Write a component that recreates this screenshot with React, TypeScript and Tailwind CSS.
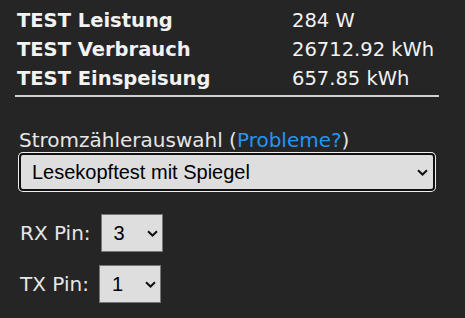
import React from "react";

const Chevron = ({ className = "" }: { className?: string }) => (
  <svg className={className} width="11" height="7" viewBox="0 0 11 7" fill="none">
    <path d="M1 1.2 L5.5 5.5 L10 1.2" stroke="#111" strokeWidth="2" />
  </svg>
);

const arial = { fontFamily: '"Liberation Sans", Arial, sans-serif' };

export default function App() {
  const rows = [
    ["TEST Leistung", "284 W"],
    ["TEST Verbrauch", "26712.92 kWh"],
    ["TEST Einspeisung", "657.85 kWh"],
  ];
  return (
    <div
      className="w-[465px] h-[318px] bg-[#252525] text-[#e6e6e6] overflow-hidden"
      style={{ fontFamily: '"DejaVu Sans", Verdana, sans-serif' }}
    >
      <div className="pl-[15px] pt-[6px]">
        <div className="w-[424px]">
          {rows.map(([k, v]) => (
            <div key={k} className="grid grid-cols-[275px_1fr] h-[29px] items-center pl-[2px]">
              <div className="font-bold text-[19.5px] text-[#f2f2f2]">{k}</div>
              <div className="text-[19.5px] text-[#f2f2f2]">{v}</div>
            </div>
          ))}
          <div className="mt-[2px] h-[2px] bg-[#d0d0d0]" />
        </div>
      </div>

      <div className="pl-[19px] mt-[32px]">
        <div className="text-[20px] leading-[23px] text-[#e6e6e6]">
          Stromzählerauswahl (<span className="text-[#2196f3]">Probleme?</span>)
        </div>
        <div className="mt-[1px] relative w-[416px] h-[38px] rounded-[4px] border-2 border-[#111] bg-[#dedede] shadow-[0_0_0_1px_#f0f0f0] flex items-center pl-[11px]">
          <span className="text-[20px] text-black" style={arial}>
            Lesekopftest mit Spiegel
          </span>
          <Chevron className="absolute right-[5px] top-[14px]" />
        </div>

        <div className="mt-[23px] flex items-center gap-[10px]">
          <span className="text-[20px] ml-[1px]">RX Pin:</span>
          <div className="relative w-[62px] h-[38px] border border-[#767676] bg-[#dedede] flex items-center pl-[12px]">
            <span className="text-[20px] text-black" style={arial}>3</span>
            <Chevron className="absolute right-[4px] top-[15px]" />
          </div>
        </div>
        <div className="mt-[13px] flex items-center gap-[10px]">
          <span className="text-[20px] ml-[1px]">TX Pin:</span>
          <div className="relative w-[62px] h-[38px] border border-[#767676] bg-[#dedede] flex items-center pl-[12px]">
            <span className="text-[20px] text-black" style={arial}>1</span>
            <Chevron className="absolute right-[4px] top-[15px]" />
          </div>
        </div>
      </div>
    </div>
  );
}
